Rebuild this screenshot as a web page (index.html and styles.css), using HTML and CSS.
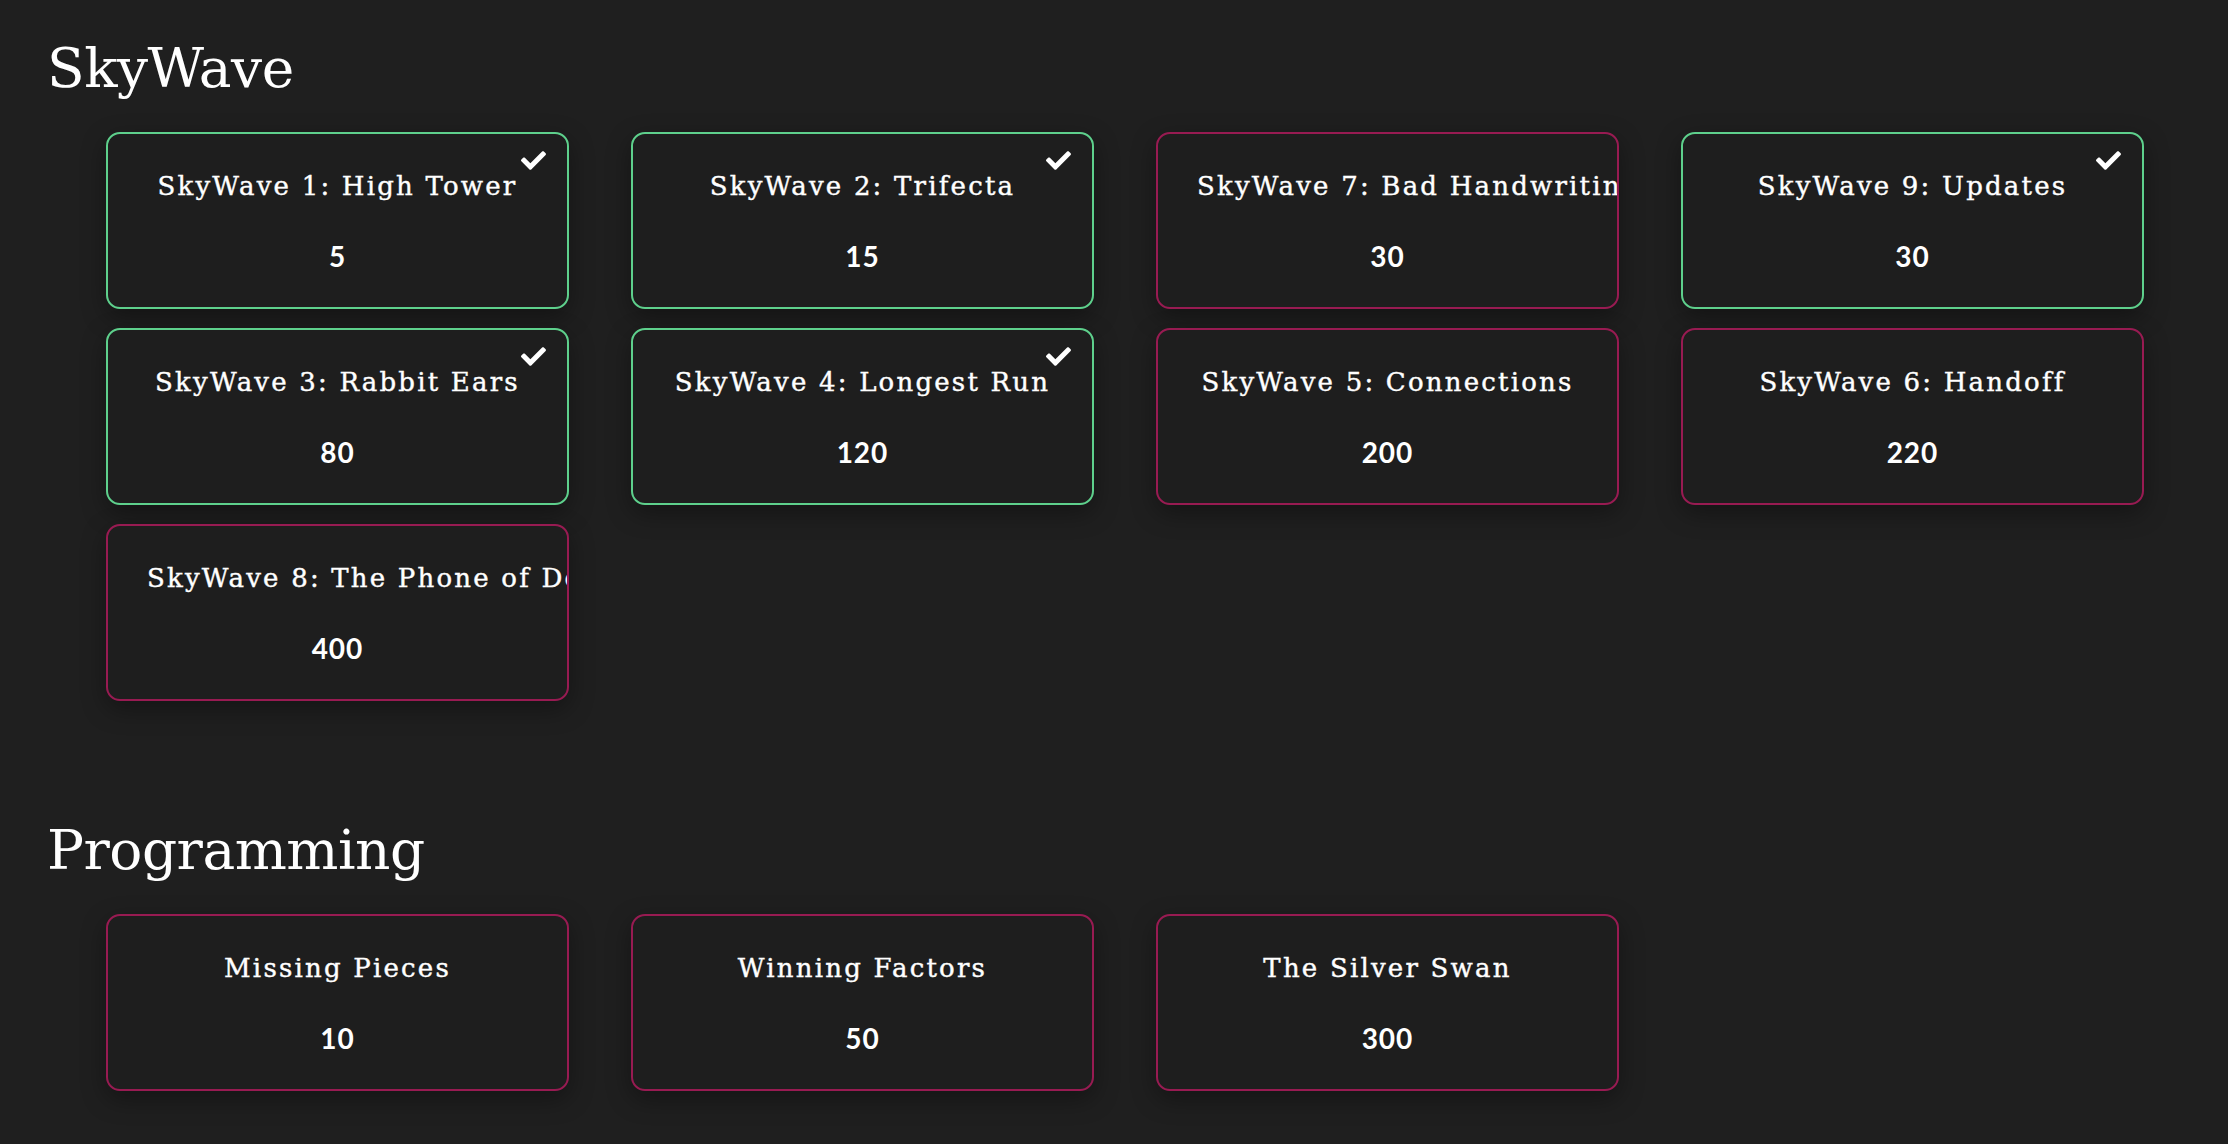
FILE: index.html
```html
<!DOCTYPE html>
<html lang="en">
<head>
<meta charset="utf-8">
<title>Challenges</title>
<link rel="stylesheet" href="styles.css">
</head>
<body>
<main class="page">
  <section class="category">
    <h2 class="category-title">SkyWave</h2>
    <div class="grid">
      <div class="card solved">
        <svg class="check" viewBox="0 0 512 512"><path d="M173.9 439.4l-166.4-166.4c-10-10-10-26.2 0-36.2l36.2-36.2c10-10 26.2-10 36.2 0L192 312.7 432.1 72.6c10-10 26.2-10 36.2 0l36.2 36.2c10 10 10 26.2 0 36.2l-294.4 294.4c-10 10-26.2 10-36.2 0z"/></svg>
        <div class="card-title">SkyWave 1: High Tower</div>
        <div class="card-value">5</div>
      </div>
      <div class="card solved">
        <svg class="check" viewBox="0 0 512 512"><path d="M173.9 439.4l-166.4-166.4c-10-10-10-26.2 0-36.2l36.2-36.2c10-10 26.2-10 36.2 0L192 312.7 432.1 72.6c10-10 26.2-10 36.2 0l36.2 36.2c10 10 10 26.2 0 36.2l-294.4 294.4c-10 10-26.2 10-36.2 0z"/></svg>
        <div class="card-title">SkyWave 2: Trifecta</div>
        <div class="card-value">15</div>
      </div>
      <div class="card">
        <div class="card-title">SkyWave 7: Bad Handwriting</div>
        <div class="card-value">30</div>
      </div>
      <div class="card solved">
        <svg class="check" viewBox="0 0 512 512"><path d="M173.9 439.4l-166.4-166.4c-10-10-10-26.2 0-36.2l36.2-36.2c10-10 26.2-10 36.2 0L192 312.7 432.1 72.6c10-10 26.2-10 36.2 0l36.2 36.2c10 10 10 26.2 0 36.2l-294.4 294.4c-10 10-26.2 10-36.2 0z"/></svg>
        <div class="card-title">SkyWave 9: Updates</div>
        <div class="card-value">30</div>
      </div>
      <div class="card solved">
        <svg class="check" viewBox="0 0 512 512"><path d="M173.9 439.4l-166.4-166.4c-10-10-10-26.2 0-36.2l36.2-36.2c10-10 26.2-10 36.2 0L192 312.7 432.1 72.6c10-10 26.2-10 36.2 0l36.2 36.2c10 10 10 26.2 0 36.2l-294.4 294.4c-10 10-26.2 10-36.2 0z"/></svg>
        <div class="card-title">SkyWave 3: Rabbit Ears</div>
        <div class="card-value">80</div>
      </div>
      <div class="card solved">
        <svg class="check" viewBox="0 0 512 512"><path d="M173.9 439.4l-166.4-166.4c-10-10-10-26.2 0-36.2l36.2-36.2c10-10 26.2-10 36.2 0L192 312.7 432.1 72.6c10-10 26.2-10 36.2 0l36.2 36.2c10 10 10 26.2 0 36.2l-294.4 294.4c-10 10-26.2 10-36.2 0z"/></svg>
        <div class="card-title">SkyWave 4: Longest Run</div>
        <div class="card-value">120</div>
      </div>
      <div class="card">
        <div class="card-title">SkyWave 5: Connections</div>
        <div class="card-value">200</div>
      </div>
      <div class="card">
        <div class="card-title">SkyWave 6: Handoff</div>
        <div class="card-value">220</div>
      </div>
      <div class="card">
        <div class="card-title">SkyWave 8: The Phone of Doom</div>
        <div class="card-value">400</div>
      </div>
    </div>
  </section>
  <section class="category">
    <h2 class="category-title">Programming</h2>
    <div class="grid">
      <div class="card">
        <div class="card-title">Missing Pieces</div>
        <div class="card-value">10</div>
      </div>
      <div class="card">
        <div class="card-title">Winning Factors</div>
        <div class="card-value">50</div>
      </div>
      <div class="card">
        <div class="card-title">The Silver Swan</div>
        <div class="card-value">300</div>
      </div>
    </div>
  </section>
</main>
</body>
</html>
```

FILE: styles.css
```css
html, body {
  margin: 0;
  padding: 0;
  background: #1f1f1f;
  color: #ffffff;
}

.page {
  padding: 35px 0 0 47px;
  min-height: 1144px;
  box-sizing: border-box;
}

.category {
  margin-bottom: 116px;
}

.category-title {
  margin: 0 0 31px 0;
  font-family: "DejaVu Serif", "Liberation Serif", serif;
  font-weight: 400;
  font-size: 55px;
  line-height: 66px;
  letter-spacing: -0.5px;
}

.grid {
  display: grid;
  grid-template-columns: repeat(4, 463px);
  column-gap: 62px;
  row-gap: 19px;
  margin-left: 59px;
}

.card {
  position: relative;
  box-sizing: border-box;
  height: 177px;
  padding: 34px 39px 0 39px;
  background: #1e1e1e;
  border: 2px solid #981b52;
  border-radius: 14px;
  box-shadow: 0 8px 24px rgba(0, 0, 0, 0.35);
  overflow: hidden;
  text-align: center;
}

.card.solved {
  border-color: #5ed08c;
}

.check {
  position: absolute;
  top: 14px;
  right: 19px;
  width: 29px;
  height: 25px;
  fill: #ffffff;
}

.card-title {
  font-family: "DejaVu Serif", "Liberation Serif", serif;
  font-size: 26px;
  line-height: 36px;
  letter-spacing: 2.2px;
  white-space: nowrap;
  -webkit-text-stroke: 0.4px #ffffff;
}

.card-value {
  margin-top: 34px;
  font-family: Lato, "Open Sans", sans-serif;
  font-weight: 700;
  font-size: 28px;
  line-height: 36px;
  letter-spacing: 1px;
}
```
